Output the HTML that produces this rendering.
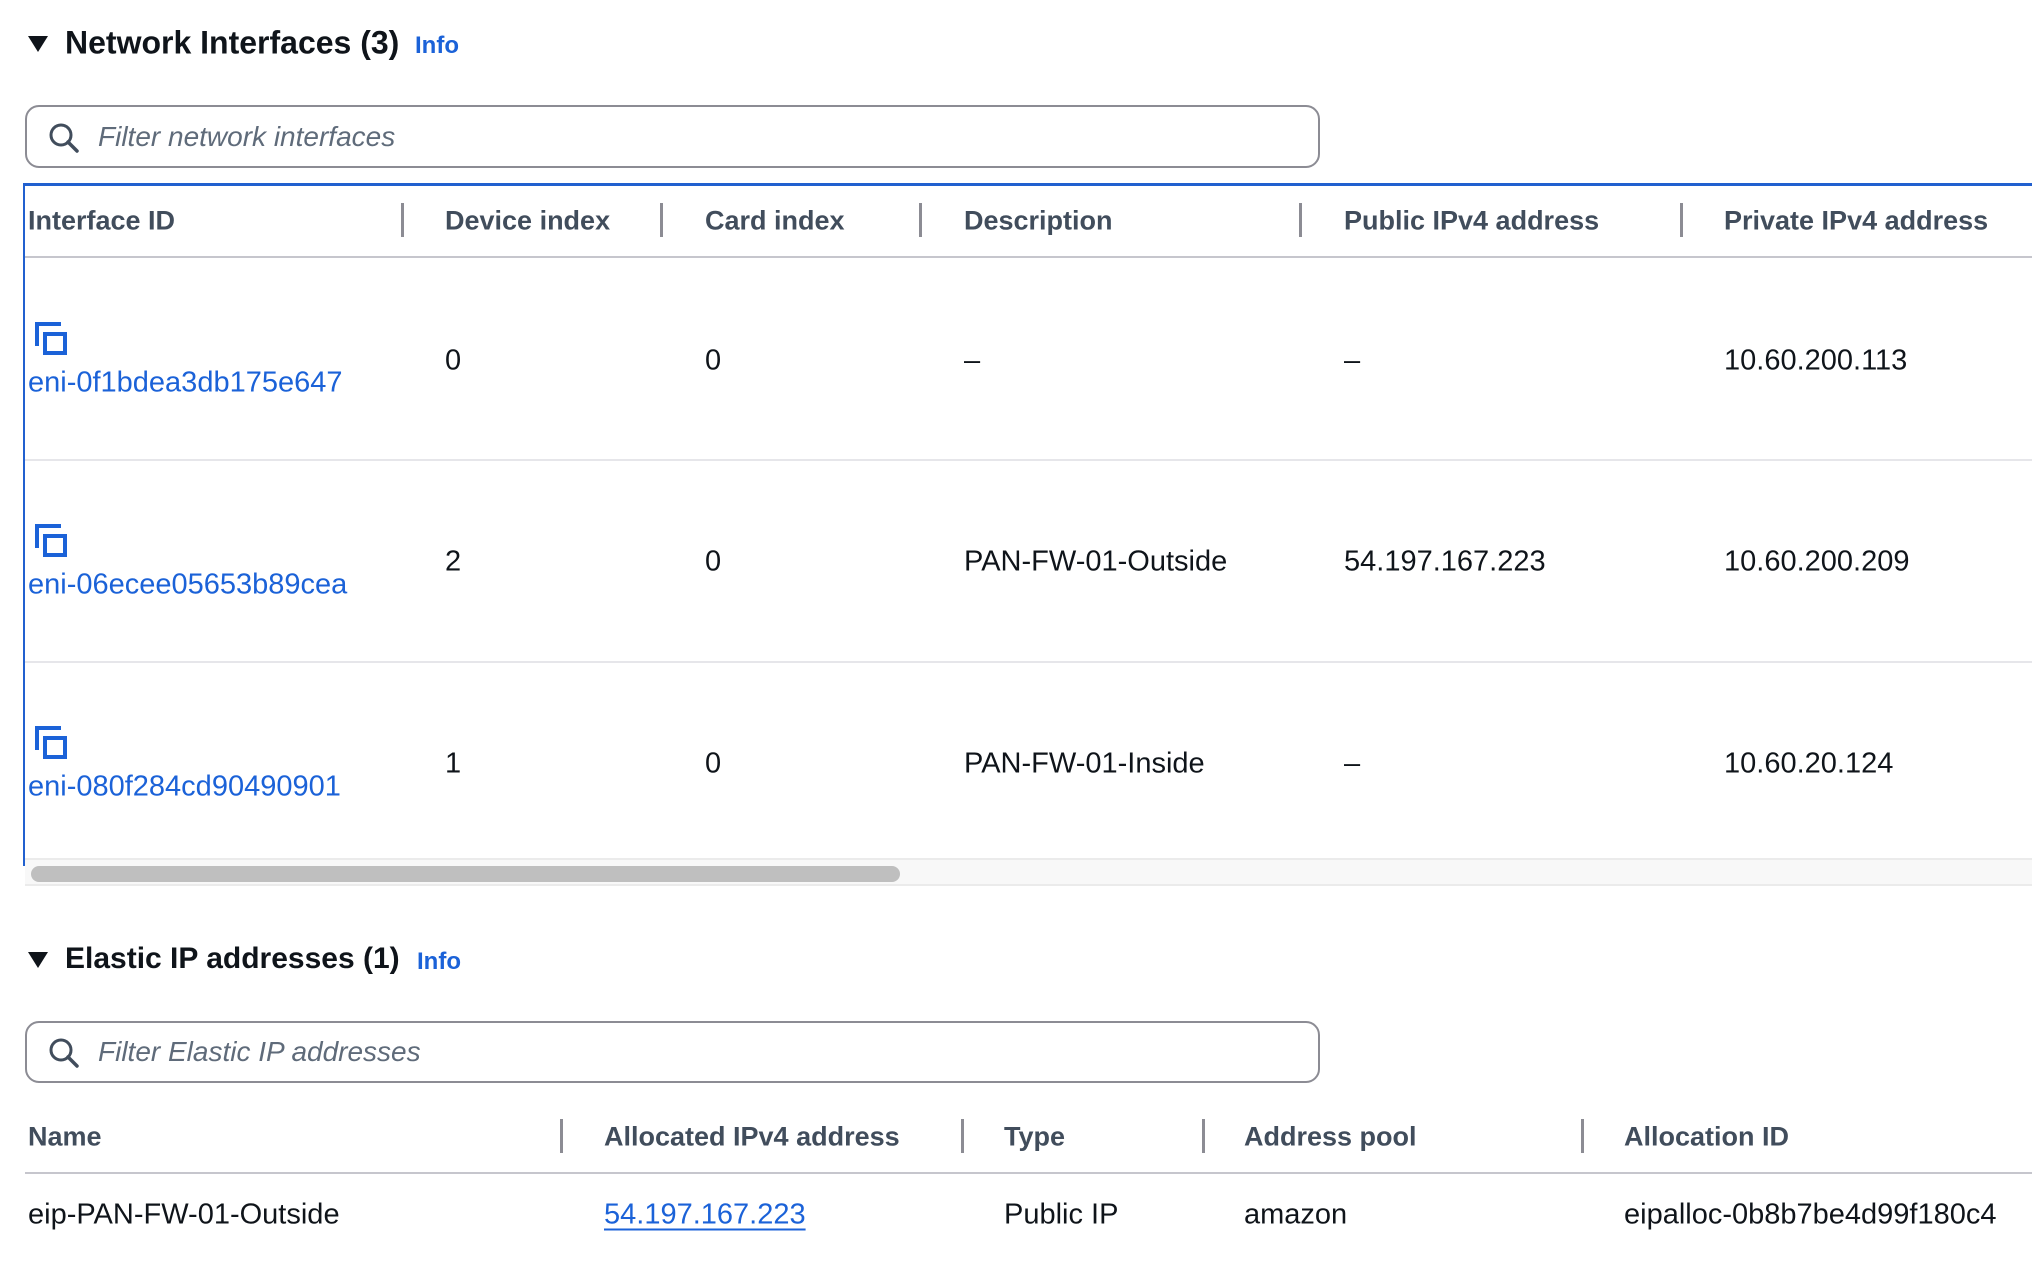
<!DOCTYPE html>
<html><head><meta charset="utf-8"><style>
*{margin:0;padding:0;box-sizing:border-box}
body{width:2032px;height:1274px;background:#fff;font-family:"Liberation Sans",sans-serif;color:#0f141a;position:relative;overflow:hidden}
.a{position:absolute;white-space:nowrap}
.h{font-size:32px;font-weight:bold;transform:translateY(-50%)}
.info{font-size:24px;font-weight:bold;color:#1b62d8;transform:translateY(-50%)}
.tri{width:0;height:0;border-left:10px solid transparent;border-right:10px solid transparent;border-top:16px solid #0f141a}
.filter{border:2px solid #8c8c94;border-radius:14px;background:#fff}
.ph{font-size:28px;font-style:italic;color:#5f6b7a;transform:translateY(-50%)}
.th{font-size:27px;font-weight:bold;color:#414d5c;transform:translateY(-50%)}
.td{font-size:29px;transform:translateY(-50%)}
.lk{color:#1b62d8}
.sep{width:3px;background:#8c8c94}
.hl{height:2px;background:#c6c6cd}
</style></head><body>
<div class="a tri" style="left:28px;top:36px"></div>
<div class="a h" style="left:65px;top:43px">Network Interfaces (3)</div>
<div class="a info" style="left:415px;top:46px">Info</div>
<div class="a filter" style="left:25px;top:105px;width:1295px;height:63px"></div>
<svg class="a" style="left:47px;top:121px" width="34" height="34" viewBox="0 0 34 34"><circle cx="14" cy="14" r="10" fill="none" stroke="#414d5c" stroke-width="3"/><line x1="21" y1="21" x2="30" y2="30" stroke="#414d5c" stroke-width="3.5" stroke-linecap="round"/></svg>
<div class="a ph" style="left:98px;top:137px">Filter network interfaces</div>

<div class="a" style="left:23px;top:183px;width:2009px;height:3px;background:#2160cf"></div>
<div class="a" style="left:23px;top:183px;width:2px;height:683px;background:#2160cf"></div>
<div class="a th" style="left:28px;top:221px">Interface ID</div>
<div class="a th" style="left:445px;top:221px">Device index</div>
<div class="a th" style="left:705px;top:221px">Card index</div>
<div class="a th" style="left:964px;top:221px">Description</div>
<div class="a th" style="left:1344px;top:221px">Public IPv4 address</div>
<div class="a th" style="left:1724px;top:221px">Private IPv4 address</div>
<div class="a sep" style="left:401px;top:203px;height:34px"></div>
<div class="a sep" style="left:660px;top:203px;height:34px"></div>
<div class="a sep" style="left:919px;top:203px;height:34px"></div>
<div class="a sep" style="left:1299px;top:203px;height:34px"></div>
<div class="a sep" style="left:1680px;top:203px;height:34px"></div>
<div class="a hl" style="left:25px;top:256px;width:2007px"></div>

<svg class="a" style="left:33px;top:320px" width="40" height="40" viewBox="0 0 40 40"><path d="M4 26V4h24" fill="none" stroke="#1b62d8" stroke-width="4"/><rect x="12" y="14" width="20" height="19" fill="none" stroke="#1b62d8" stroke-width="4"/></svg>
<div class="a td lk" style="left:28px;top:383px">eni-0f1bdea3db175e647</div>
<div class="a td" style="left:445px;top:361px">0</div>
<div class="a td" style="left:705px;top:361px">0</div>
<div class="a td" style="left:964px;top:361px">–</div>
<div class="a td" style="left:1344px;top:361px">–</div>
<div class="a td" style="left:1724px;top:361px">10.60.200.113</div>
<div class="a hl" style="left:25px;top:459px;width:2007px;background:#e6e6ea"></div>

<svg class="a" style="left:33px;top:522px" width="40" height="40" viewBox="0 0 40 40"><path d="M4 26V4h24" fill="none" stroke="#1b62d8" stroke-width="4"/><rect x="12" y="14" width="20" height="19" fill="none" stroke="#1b62d8" stroke-width="4"/></svg>
<div class="a td lk" style="left:28px;top:585px">eni-06ecee05653b89cea</div>
<div class="a td" style="left:445px;top:562px">2</div>
<div class="a td" style="left:705px;top:562px">0</div>
<div class="a td" style="left:964px;top:562px">PAN-FW-01-Outside</div>
<div class="a td" style="left:1344px;top:562px">54.197.167.223</div>
<div class="a td" style="left:1724px;top:562px">10.60.200.209</div>
<div class="a hl" style="left:25px;top:661px;width:2007px;background:#e6e6ea"></div>

<svg class="a" style="left:33px;top:724px" width="40" height="40" viewBox="0 0 40 40"><path d="M4 26V4h24" fill="none" stroke="#1b62d8" stroke-width="4"/><rect x="12" y="14" width="20" height="19" fill="none" stroke="#1b62d8" stroke-width="4"/></svg>
<div class="a td lk" style="left:28px;top:787px">eni-080f284cd90490901</div>
<div class="a td" style="left:445px;top:764px">1</div>
<div class="a td" style="left:705px;top:764px">0</div>
<div class="a td" style="left:964px;top:764px">PAN-FW-01-Inside</div>
<div class="a td" style="left:1344px;top:764px">–</div>
<div class="a td" style="left:1724px;top:764px">10.60.20.124</div>

<div class="a" style="left:25px;top:858px;width:2007px;height:28px;background:#f8f8f8;border-top:2px solid #ebebeb;border-bottom:2px solid #ebebeb"></div>
<div class="a" style="left:31px;top:866px;width:869px;height:16px;border-radius:8px;background:#bfbfbf"></div>

<div class="a tri" style="left:28px;top:952px"></div>
<div class="a h" style="left:65px;top:959px;font-size:30px">Elastic IP addresses (1)</div>
<div class="a info" style="left:417px;top:962px">Info</div>
<div class="a filter" style="left:25px;top:1021px;width:1295px;height:62px"></div>
<svg class="a" style="left:47px;top:1036px" width="34" height="34" viewBox="0 0 34 34"><circle cx="14" cy="14" r="10" fill="none" stroke="#414d5c" stroke-width="3"/><line x1="21" y1="21" x2="30" y2="30" stroke="#414d5c" stroke-width="3.5" stroke-linecap="round"/></svg>
<div class="a ph" style="left:98px;top:1052px">Filter Elastic IP addresses</div>

<div class="a th" style="left:28px;top:1137px">Name</div>
<div class="a th" style="left:604px;top:1137px">Allocated IPv4 address</div>
<div class="a th" style="left:1004px;top:1137px">Type</div>
<div class="a th" style="left:1244px;top:1137px">Address pool</div>
<div class="a th" style="left:1624px;top:1137px">Allocation ID</div>
<div class="a sep" style="left:560px;top:1119px;height:34px"></div>
<div class="a sep" style="left:961px;top:1119px;height:34px"></div>
<div class="a sep" style="left:1202px;top:1119px;height:34px"></div>
<div class="a sep" style="left:1581px;top:1119px;height:34px"></div>
<div class="a hl" style="left:25px;top:1172px;width:2007px"></div>
<div class="a td" style="left:28px;top:1215px">eip-PAN-FW-01-Outside</div>
<div class="a td lk" style="left:604px;top:1215px;text-decoration:underline;text-underline-offset:5px">54.197.167.223</div>
<div class="a td" style="left:1004px;top:1215px">Public IP</div>
<div class="a td" style="left:1244px;top:1215px">amazon</div>
<div class="a td" style="left:1624px;top:1215px">eipalloc-0b8b7be4d99f180c4</div>
</body></html>
